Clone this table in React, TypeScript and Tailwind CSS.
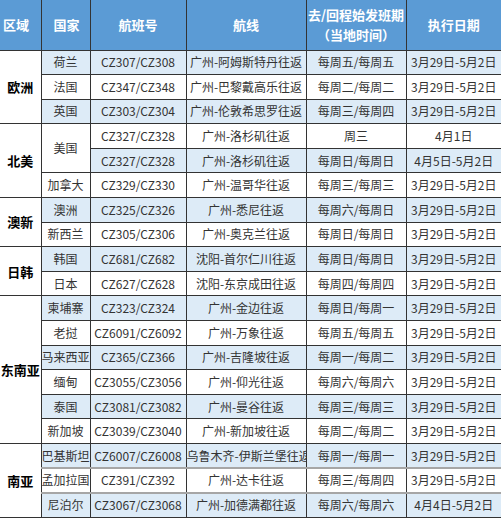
type Row = {
  region?: string;
  span?: number;
  country?: string;
  cspan?: number;
  flight: string;
  route: string;
  days: string;
  dates: string;
  soft?: boolean;
};

const rows: Row[] = [
  { region: "欧洲", span: 3, country: "荷兰", flight: "CZ307/CZ308", route: "广州-阿姆斯特丹往返", days: "每周五/每周五", dates: "3月29日-5月2日" },
  { country: "法国", flight: "CZ347/CZ348", route: "广州-巴黎戴高乐往返", days: "每周二/每周二", dates: "3月29日-5月2日" },
  { country: "英国", flight: "CZ303/CZ304", route: "广州-伦敦希思罗往返", days: "每周三/每周四", dates: "3月29日-5月2日" },
  { region: "北美", span: 3, country: "美国", cspan: 2, flight: "CZ327/CZ328", route: "广州-洛杉矶往返", days: "周三", dates: "4月1日" },
  { flight: "CZ327/CZ328", route: "广州-洛杉矶往返", days: "每周日/每周日", dates: "4月5日-5月2日" },
  { country: "加拿大", flight: "CZ329/CZ330", route: "广州-温哥华往返", days: "每周三/每周三", dates: "3月29日-5月2日" },
  { region: "澳新", span: 2, country: "澳洲", flight: "CZ325/CZ326", route: "广州-悉尼往返", days: "每周六/每周日", dates: "3月29日-5月2日" },
  { country: "新西兰", flight: "CZ305/CZ306", route: "广州-奥克兰往返", days: "每周日/每周日", dates: "3月29日-5月2日" },
  { region: "日韩", span: 2, country: "韩国", flight: "CZ681/CZ682", route: "沈阳-首尔仁川往返", days: "每周日/每周日", dates: "3月29日-5月2日" },
  { country: "日本", flight: "CZ627/CZ628", route: "沈阳-东京成田往返", days: "每周四/每周四", dates: "3月29日-5月2日" },
  { region: "东南亚", span: 6, country: "柬埔寨", flight: "CZ323/CZ324", route: "广州-金边往返", days: "每周日/每周一", dates: "3月29日-5月2日" },
  { country: "老挝", flight: "CZ6091/CZ6092", route: "广州-万象往返", days: "每周五/每周五", dates: "3月29日-5月2日" },
  { country: "马来西亚", flight: "CZ365/CZ366", route: "广州-吉隆坡往返", days: "每周一/每周二", dates: "3月29日-5月2日" },
  { country: "缅甸", flight: "CZ3055/CZ3056", route: "广州-仰光往返", days: "每周六/每周六", dates: "3月29日-5月2日" },
  { country: "泰国", flight: "CZ3081/CZ3082", route: "广州-曼谷往返", days: "每周三/每周三", dates: "3月29日-5月2日" },
  { country: "新加坡", flight: "CZ3039/CZ3040", route: "广州-新加坡往返", days: "每周二/每周二", dates: "3月29日-5月2日" },
  { region: "南亚", span: 3, country: "巴基斯坦", flight: "CZ6007/CZ6008", route: "乌鲁木齐-伊斯兰堡往返", days: "每周一/每周一", dates: "3月29日-5月2日", soft: true },
  { country: "孟加拉国", flight: "CZ391/CZ392", route: "广州-达卡往返", days: "每周三/每周四", dates: "3月29日-5月2日", soft: true },
  { country: "尼泊尔", flight: "CZ3067/CZ3068", route: "广州-加德满都往返", days: "每周六/每周六", dates: "4月4日-5月2日" },
];

const font = { fontFamily: '"Noto Sans CJK SC", "Noto Sans", sans-serif' };

export default function App() {
  return (
    <div className="w-[501px] h-[518px] overflow-hidden bg-white" style={font}>
      <table className="w-[501px] table-fixed border-collapse text-[12px] text-[#333]">
        <colgroup>
          <col className="w-[41px]" />
          <col className="w-[49px]" />
          <col className="w-[96px]" />
          <col className="w-[120px]" />
          <col className="w-[100px]" />
          <col className="w-[95px]" />
        </colgroup>
        <thead>
          <tr className="h-[50px] bg-[#5b9bd5] text-[13px] font-semibold text-white">
            <th className="border-r border-b border-[#333] text-left pl-[3px] font-semibold">区域</th>
            <th className="border-x border-b border-[#333] text-left pl-[12px] font-semibold">国家</th>
            <th className="border-x border-b border-[#333] font-semibold">航班号</th>
            <th className="border-x border-b border-[#333] font-semibold">航线</th>
            <th className="border-x border-b border-[#333] font-semibold leading-[20px]">
              去/回程始发班期
              <br />（当地时间）
            </th>
            <th className="border-l border-b border-[#333] font-semibold">执行日期</th>
          </tr>
        </thead>
        <tbody>
          {rows.map((r, i) => {
            const bg = i % 2 === 0 ? "bg-[#ddebf7]" : "bg-white";
            const line = r.soft ? "border-b-2 border-b-[#a6a6a6]" : "border-b border-b-[#333]";
            return (
              <tr key={i} className="h-[24.6px]">
                {r.region && (
                  <td
                    rowSpan={r.span}
                    className="border-r border-b border-[#333] bg-white text-center text-[13px] font-bold text-black"
                  >
                    {r.region}
                  </td>
                )}
                {r.country && (
                  <td
                    rowSpan={r.cspan}
                    className={`border-x border-[#333] ${line} text-center whitespace-nowrap overflow-hidden ${r.cspan ? "bg-white" : bg}`}
                  >
                    {r.country}
                  </td>
                )}
                <td className={`border-x border-[#333] ${line} ${bg} text-center whitespace-nowrap`}>{r.flight}</td>
                <td className={`border-x border-[#333] ${line} ${bg} text-center whitespace-nowrap overflow-hidden`}>
                  {r.route}
                </td>
                <td className={`border-x border-[#333] ${line} ${bg} text-center whitespace-nowrap`}>{r.days}</td>
                <td className={`border-l border-[#333] ${line} ${bg} text-center whitespace-nowrap`}>{r.dates}</td>
              </tr>
            );
          })}
        </tbody>
      </table>
    </div>
  );
}
